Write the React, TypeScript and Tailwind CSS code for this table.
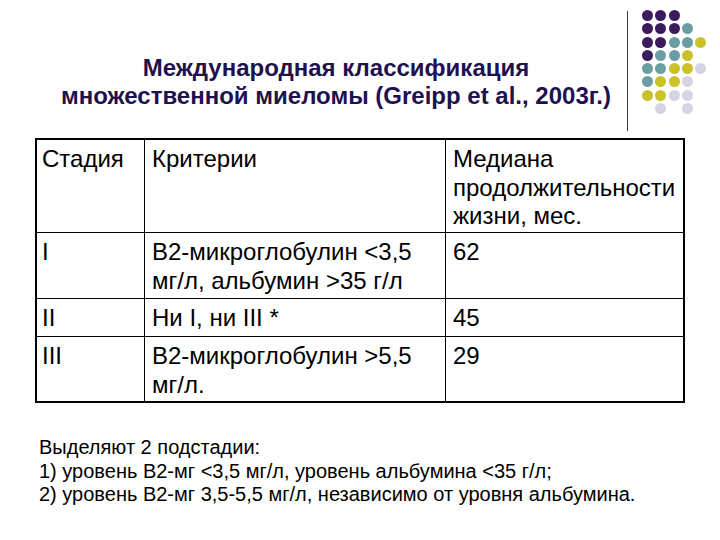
import React from "react";

const P = "bg-[#3b1a5e]";
const T = "bg-[#6b9ea3]";
const Y = "bg-[#cbc22a]";
const L = "bg-[#d4d4e4]";
const N = "";

const dots: string[][] = [
  [P, P, P, N, N],
  [P, P, P, T, N],
  [P, P, T, T, Y],
  [P, T, T, Y, N],
  [T, T, Y, Y, L],
  [T, Y, Y, L, N],
  [Y, Y, L, L, N],
  [N, L, N, L, N],
];

function Cell({ children, first }: { children: React.ReactNode; first?: boolean }) {
  return (
    <div
      className={
        "bg-white pt-[5px] text-[24px] leading-[28.6px] text-black " +
        (first ? "pl-[5px]" : "pl-[7px]")
      }
    >
      {children}
    </div>
  );
}

export default function App() {
  return (
    <div className="w-[720px] h-[540px] bg-white overflow-hidden font-['Liberation_Sans',Arial,sans-serif] flex flex-col">
      <div className="flex items-start h-[138px] shrink-0">
        <div className="ml-[45px] w-[582px] pt-[54px] text-center text-[24px] leading-[28px] font-bold text-[#1f1150]">
          <div>Международная классификация</div>
          <div>множественной миеломы (Greipp et al., 2003г.)</div>
        </div>
        <div className="w-px h-[120px] mt-[11px] bg-[#3a3a3a]" />
        <div className="ml-[14px] mt-[10px] grid grid-cols-[repeat(5,11px)] grid-rows-[repeat(8,11px)] gap-[2.3px]">
          {dots.flatMap((row, r) =>
            row.map((c, i) => (
              <div key={r + "-" + i} className={"w-[11px] h-[11px] rounded-full " + c} />
            ))
          )}
        </div>
      </div>

      <div className="ml-[35px] w-[650px] border-2 border-black bg-black grid grid-cols-[107px_300px_237px] grid-rows-[92px_65px_37px_64px] gap-px shrink-0">
        <Cell first>Стадия</Cell>
        <Cell>Критерии</Cell>
        <Cell>
          <div>Медиана</div>
          <div>продолжительности</div>
          <div>жизни, мес.</div>
        </Cell>

        <Cell first>I</Cell>
        <Cell>
          <div>В2-микроглобулин &lt;3,5</div>
          <div>мг/л, альбумин &gt;35 г/л</div>
        </Cell>
        <Cell>62</Cell>

        <Cell first>II</Cell>
        <Cell>Ни I, ни III *</Cell>
        <Cell>45</Cell>

        <Cell first>III</Cell>
        <Cell>
          <div>В2-микроглобулин &gt;5,5</div>
          <div>мг/л.</div>
        </Cell>
        <Cell>29</Cell>
      </div>

      <div className="mt-[33px] ml-[39px] text-[20px] leading-[23.5px] text-black">
        <div>Выделяют 2 подстадии:</div>
        <div>1) уровень В2-мг &lt;3,5 мг/л, уровень альбумина &lt;35 г/л;</div>
        <div>2) уровень В2-мг 3,5-5,5 мг/л, независимо от уровня альбумина.</div>
      </div>
    </div>
  );
}
